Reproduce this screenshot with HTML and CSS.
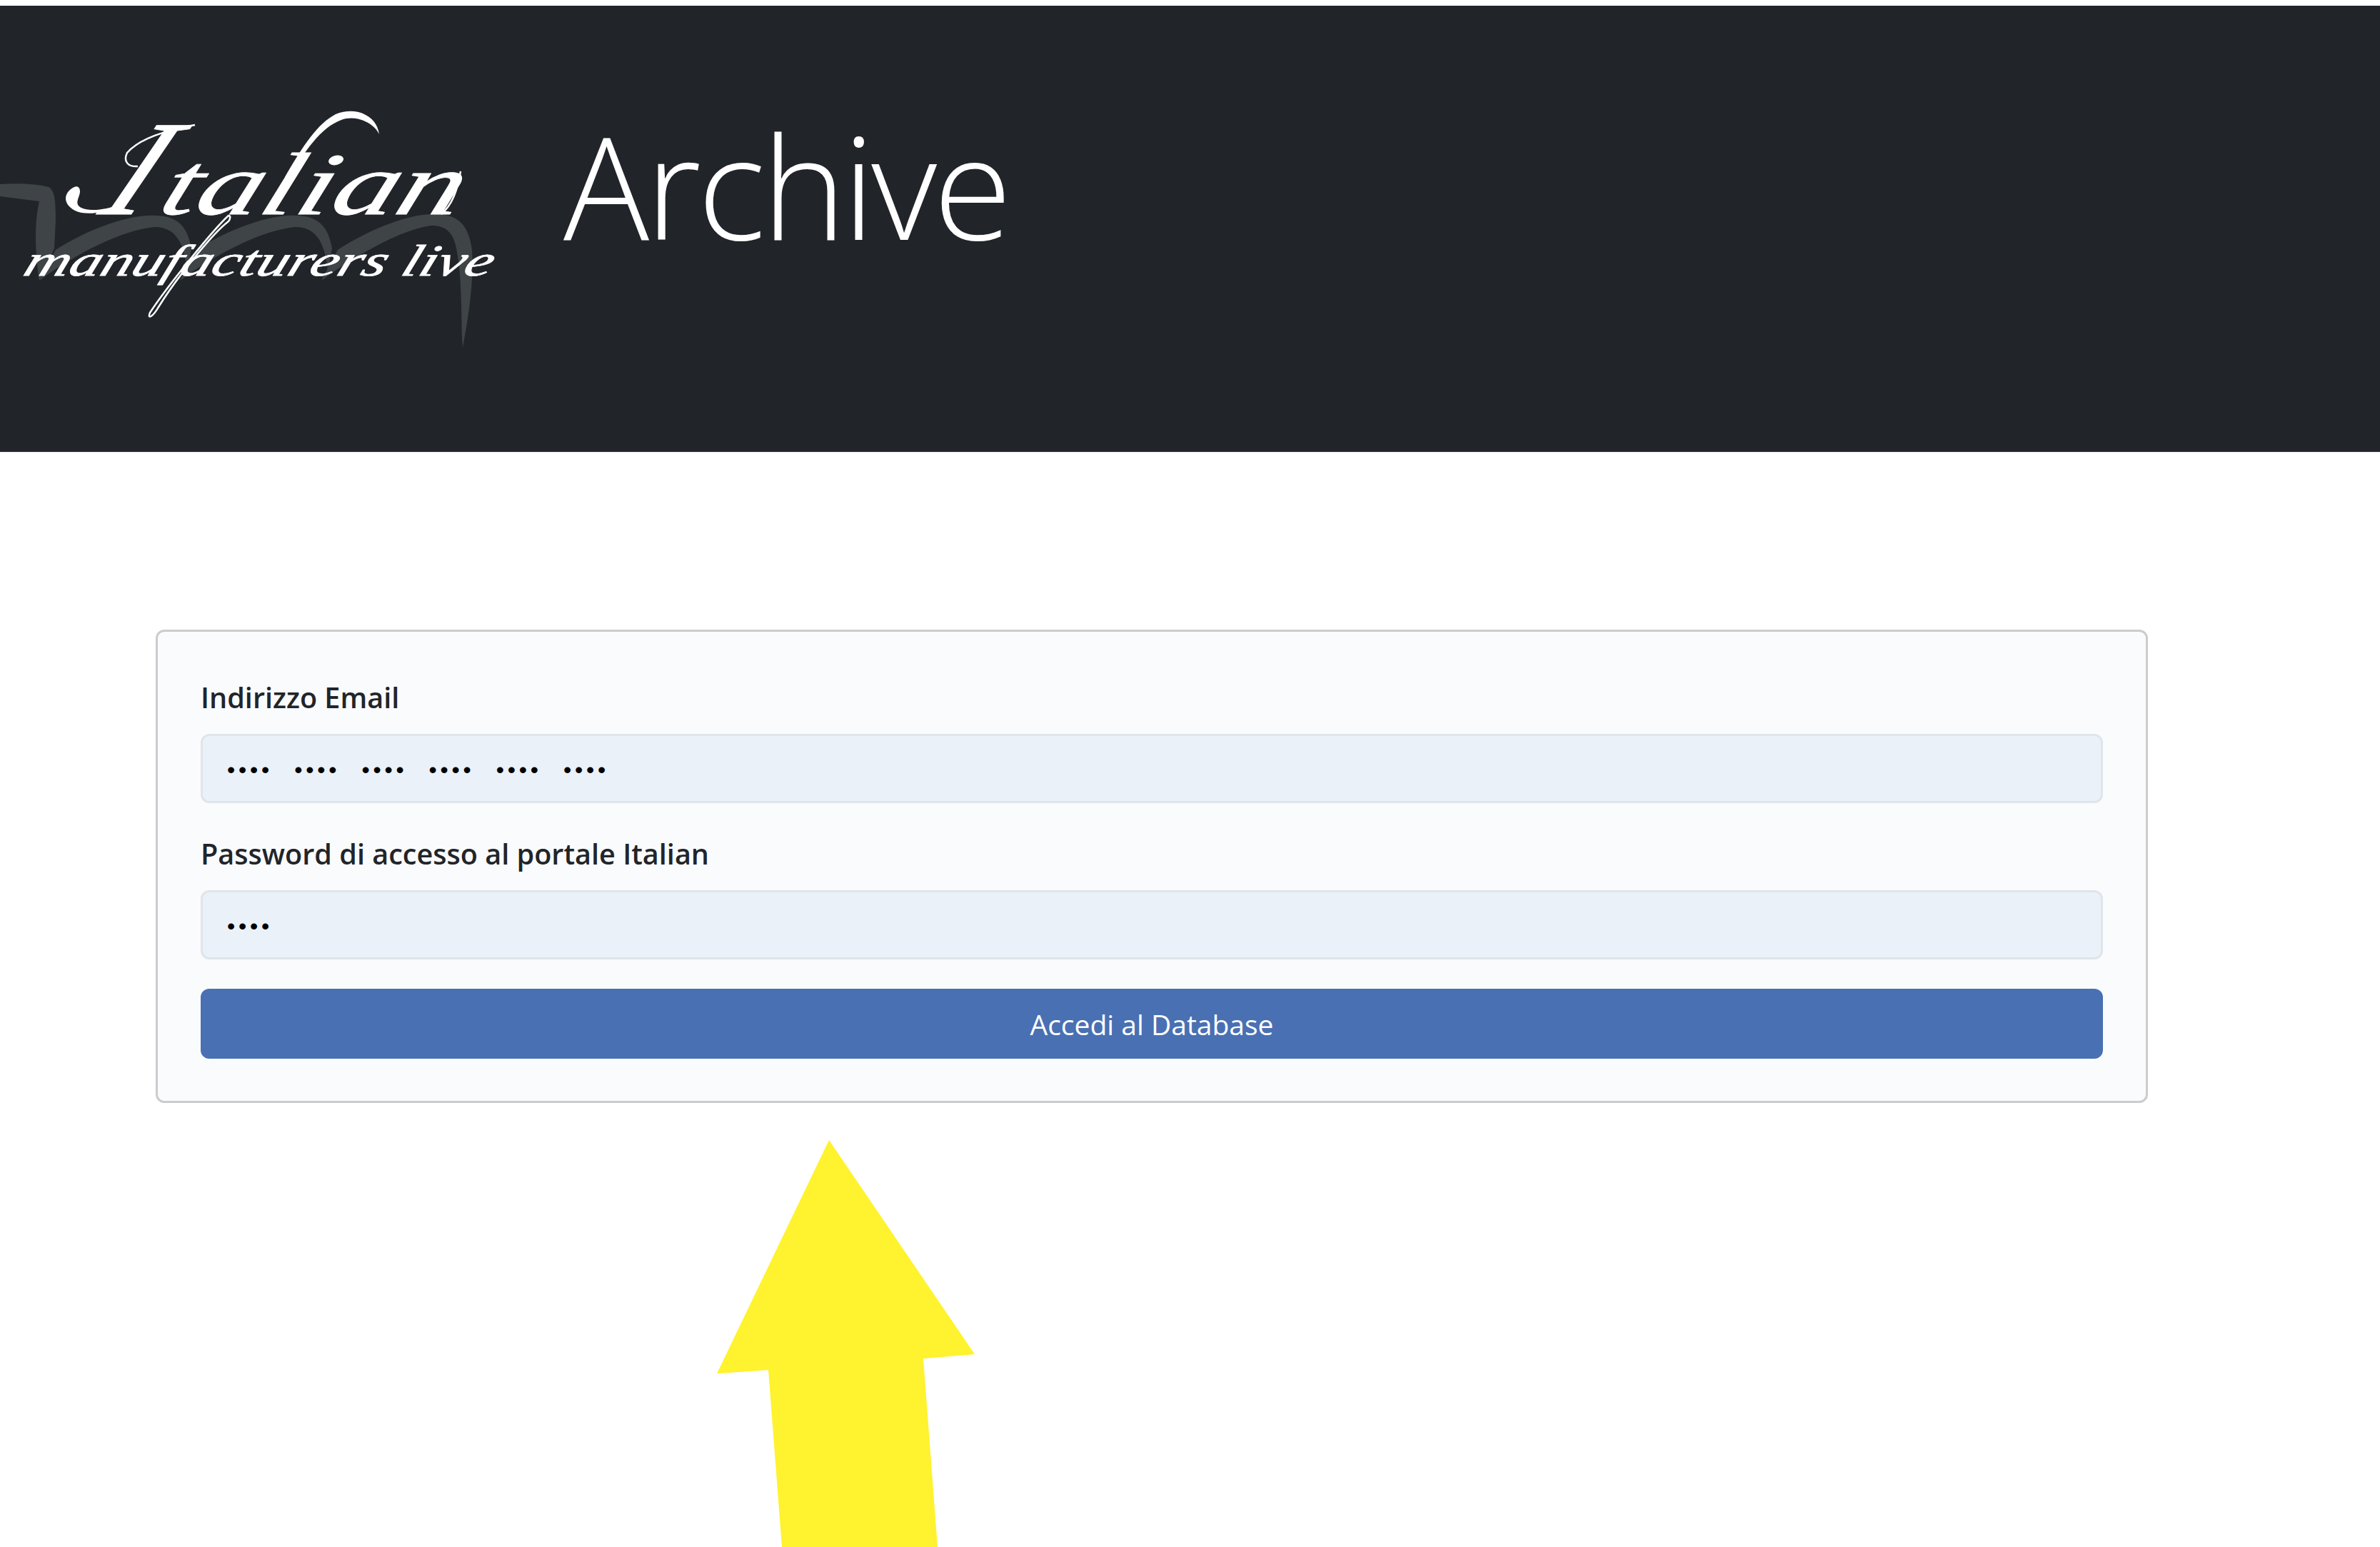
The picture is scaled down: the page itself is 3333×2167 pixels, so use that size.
FILE: index.html
```html
<!DOCTYPE html>
<html lang="it">

<head>
  <meta charset="UTF-8" />
  <title>Archive</title>
  <meta name="viewport" content="width=device-width, initial-scale=1.0" />
  <link rel="stylesheet" href="styles.css">
</head>

<body>

  <header class="topbar">
    <svg class="logo" width="720" height="626" viewBox="0 0 720 626" role="img" aria-label="Italian manufacturers live">
      <!-- grey swoosh behind the wordmark -->
      <g class="swoosh">
        <path d="M0 250 C25 248 55 250 68 254 C76 258 78 270 78 300 L76 340 L55 385 C50 350 47 310 55 274 L0 267 Z" />
        <path d="M55 385 L78 342 C120 315 170 296 207 294 C245 292 262 305 268 340 L262 372 C258 330 245 310 216 310 C170 315 110 345 55 385 Z" />
        <path d="M252 385 L275 342 C317 315 367 296 404 294 C442 292 459 305 465 340 L459 372 C455 330 442 310 413 310 C367 315 307 345 252 385 Z" />
        <path d="M450 385 L473 342 C515 315 565 294 602 292 C640 290 656 305 661 342 C664 390 655 440 648 479 C645 440 648 390 640 345 C636 318 625 308 604 308 C565 313 505 345 450 385 Z" />
      </g>
      <!-- wordmark, swashes are drawn on top -->
      <text class="word-cap" transform="translate(135 292) skewX(-27)">I</text>
      <text class="word-main" transform="translate(218 292) skewX(-20)" textLength="420" lengthAdjust="spacingAndGlyphs">talian</text>
      <text class="word-sub" transform="translate(30 378) skewX(-20)" textLength="655" lengthAdjust="spacingAndGlyphs">manufacturers live</text>
      <g class="swash">
        <path class="swash-fill" d="M399 240 C425 195 445 165 470 152 C500 140 528 155 531 180 C524 165 500 152 478 160 C450 170 425 205 405 242 Z" />
        <path d="M273 167 C235 174 195 186 178 206 C172 219 180 226 193 225" />
        <path class="swash-fill" d="M104 254 C88 262 88 278 105 287 C120 294 145 292 170 277 C145 288 122 288 112 282 C104 276 112 268 112 260 C112 254 108 252 104 254 Z" />
        <path d="M320 294 C300 312 235 392 210 430 C206 440 214 436 222 422 C250 377 300 317 320 302 C323 298 323 294 320 294 Z" />
        <path d="M618 292 C632 280 640 262 645 232" />
      </g>
    </svg>
    <h1 class="title">Archive</h1>
  </header>

  <main class="container">
    <form class="login-card">
      <div class="field">
        <label for="email">Indirizzo Email</label>
        <input id="email" type="text" value="•••• •••• •••• •••• •••• ••••" />
      </div>
      <div class="field">
        <label for="password">Password di accesso al portale Italian</label>
        <input id="password" type="text" value="••••" />
      </div>
      <button class="submit-btn" type="button">Accedi al Database</button>
    </form>
  </main>

  <svg class="arrow" width="361" height="570" viewBox="0 0 361 570" aria-hidden="true">
    <polygon points="157,0 361,300 289,306 309,570 91,570 72,322 0,327" />
  </svg>

</body>

</html>
```

FILE: styles.css
```css
* {
  margin: 0;
  padding: 0;
  box-sizing: border-box;
}

body {
  position: relative;
  height: 2167px;
  padding-top: 8px;
  overflow: hidden;
  background: #fff;
  color: #212529;
  font-family: 'Open Sans', sans-serif;
}

.topbar {
  display: flex;
  align-items: flex-start;
  height: 626px;
  background: #212529;
  border-bottom: 1px solid #e4ebf0;
}

.logo {
  flex: none;
  width: 720px;
  height: 626px;
}

.swoosh path {
  fill: #3f4447;
}

.word-main,
.word-cap,
.word-sub {
  fill: #fff;
  stroke: #fff;
  stroke-width: 0.8;
  font-family: 'Liberation Serif', serif;
  font-style: italic;
}

.word-main {
  font-size: 124px;
}

.word-cap {
  font-size: 190px;
}

.word-sub {
  font-size: 62px;
}

.swash path {
  fill: none;
  stroke: #fff;
  stroke-width: 2.5;
}

.swash .swash-fill {
  fill: #fff;
  stroke: none;
}

.title {
  margin-left: 69px;
  margin-top: 116px;
  color: #fff;
  font-size: 200px;
  font-weight: 300;
  letter-spacing: -5px;
  line-height: 270px;
}

.container {
  padding: 248px 325px 0 218px;
}

.login-card {
  display: flex;
  flex-direction: column;
  gap: 41px;
  height: 663px;
  padding: 62px 60px 59px;
  background: #fafbfd;
  border: 3px solid #ccc;
  border-radius: 12px;
}

.field {
  display: flex;
  flex-direction: column;
  gap: 21px;
}

.field label {
  font-size: 39.6px;
  font-weight: 600;
  line-height: 60px;
}

.field input {
  width: 100%;
  height: 97px;
  padding: 3px 34px 0;
  background: #eaf1f9;
  border: 3px solid #e0e5ea;
  border-radius: 12px;
  color: #000;
  font-family: 'Liberation Sans', sans-serif;
  font-size: 32px;
  letter-spacing: 4.8px;
  word-spacing: 16.5px;
}

.submit-btn {
  width: 100%;
  height: 98px;
  background: #4970b3;
  border: none;
  border-radius: 12px;
  color: #fff;
  font-family: 'Open Sans', sans-serif;
  font-size: 39px;
  cursor: pointer;
}

.arrow {
  position: absolute;
  left: 1004px;
  top: 1597px;
}

.arrow polygon {
  fill: #fff22e;
}
```
